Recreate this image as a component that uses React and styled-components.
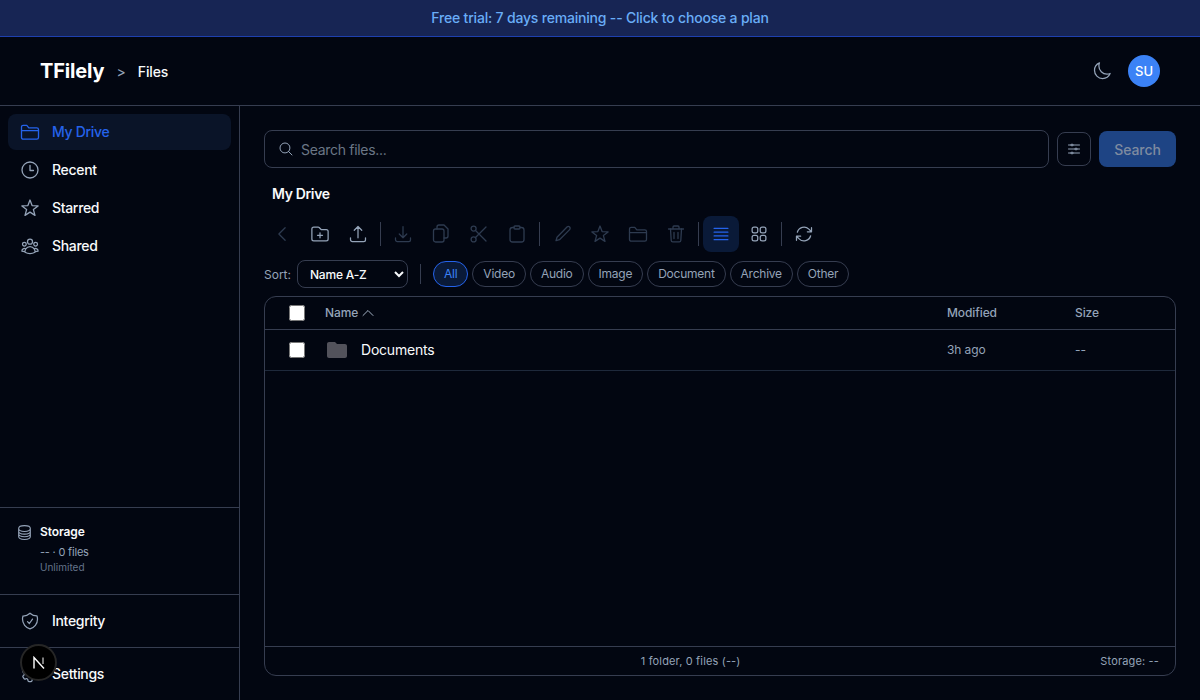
import React from 'react';
import styled, { createGlobalStyle } from 'styled-components';
import {
    HiOutlineUserGroup,
    HiOutlineCircleStack,
    HiOutlineShieldCheck,
    HiOutlineCog6Tooth,
    HiOutlineMoon,
    HiOutlineMagnifyingGlass,
    HiOutlineAdjustmentsHorizontal,
    HiOutlineChevronLeft,
    HiOutlineChevronUp,
    HiOutlineFolderPlus,
    HiOutlineArrowUpTray,
    HiOutlineArrowDownTray,
    HiOutlineBars4,
    HiOutlineSquares2X2,
    HiOutlineArrowPath
} from 'react-icons/hi2';
import { MdFolder } from 'react-icons/md';

const line = '#363d50';

const GlobalStyle = createGlobalStyle`
    html, body {
        margin: 0;
        height: 100%;
        background: #020611;
        overflow: hidden;
    }
    * {
        box-sizing: border-box;
    }
    body {
        font-family: Inter, "Liberation Sans", sans-serif;
        color: #f8fafc;
    }
`;

const Page = styled.div`
    height: 700px;
    display: flex;
    flex-direction: column;
`;

const Banner = styled.div`
    height: 37px;
    flex: none;
    padding-bottom: 2px;
    background: #172554;
    border-bottom: 1px solid #1e40af;
    color: #69adf7;
    font-size: 14px;
    font-weight: 500;
    letter-spacing: -0.19px;
    display: flex;
    align-items: center;
    justify-content: center;
`;

const Header = styled.header`
    height: 69px;
    flex: none;
    border-bottom: 1px solid ${line};
    display: flex;
    align-items: center;
    padding: 0 40px;
`;

const Logo = styled.div`
    font-size: 20px;
    font-weight: 700;
    letter-spacing: -0.15px;
    color: #fff;
`;

const Crumb = styled.span`
    margin-left: 12px;
    font-size: 14px;
    color: #94a3b8;
`;

const CrumbTitle = styled.span`
    margin-left: 12px;
    font-size: 14px;
    font-weight: 500;
    letter-spacing: -0.1px;
    color: #f8fafc;
`;

const HeaderRight = styled.div`
    margin-left: auto;
    display: flex;
    align-items: center;
    gap: 16px;
    color: #94a3b8;
`;

const Avatar = styled.div`
    width: 32px;
    height: 32px;
    border-radius: 50%;
    background: #3b82f6;
    color: #fff;
    font-size: 13px;
    font-weight: 500;
    display: flex;
    align-items: center;
    justify-content: center;
`;

const Body = styled.div`
    flex: 1;
    min-height: 0;
    display: flex;
`;

const Sidebar = styled.aside`
    width: 240px;
    flex: none;
    border-right: 1px solid ${line};
    display: flex;
    flex-direction: column;
`;

const Nav = styled.nav`
    flex: 1;
    padding: 8px 8px 0;
    display: flex;
    flex-direction: column;
    gap: 2px;
`;

const NavItem = styled.div`
    height: 36px;
    display: flex;
    align-items: center;
    gap: 12px;
    padding: 0 12px;
    border-radius: 8px;
    font-size: 14px;
    font-weight: 500;
    letter-spacing: -0.32px;
    background: ${p => (p.$active ? '#0a1428' : 'transparent')};
    color: ${p => (p.$active ? '#2563eb' : '#f8fafc')};

    svg {
        flex: none;
        color: ${p => (p.$active ? '#2563eb' : '#94a3b8')};
    }
`;

const Raised = styled.span`
    margin-bottom: 2px;
`;

const Storage = styled.div`
    height: 87px;
    flex: none;
    border-top: 1px solid ${line};
    padding: 16px 16px 0;
    display: flex;
    gap: 7px;
    color: #94a3b8;
`;

const StorageTitle = styled.div`
    font-size: 12px;
    font-weight: 600;
    letter-spacing: -0.1px;
    color: #f8fafc;
    line-height: 16px;
`;

const StorageInfo = styled.div`
    margin-top: 5px;
    font-size: 11px;
    line-height: 14px;
    letter-spacing: -0.2px;
    color: #94a3b8;
`;

const StorageLimit = styled.div`
    margin-top: 1px;
    font-size: 10px;
    line-height: 14px;
    color: #64748b;
`;

const FooterLink = styled.div`
    height: 53px;
    flex: none;
    border-top: 1px solid ${line};
    padding: 0 8px;
    display: flex;
    align-items: center;
`;

const Main = styled.main`
    flex: 1;
    min-width: 0;
    padding: 24px;
    display: flex;
    flex-direction: column;
`;

const SearchRow = styled.div`
    height: 38px;
    flex: none;
    display: flex;
    align-items: center;
    gap: 8px;
`;

const SearchBox = styled.div`
    flex: 1;
    height: 38px;
    border: 1px solid ${line};
    border-radius: 8px;
    display: flex;
    align-items: center;
    gap: 7px;
    padding: 0 13px;
    font-size: 14px;
    letter-spacing: -0.3px;
    color: #6b7686;

    svg {
        color: #94a3b8;
    }
`;

const FilterButton = styled.div`
    width: 34px;
    height: 34px;
    border: 1px solid ${line};
    border-radius: 8px;
    display: flex;
    align-items: center;
    justify-content: center;
    color: #94a3b8;
`;

const SearchButton = styled.div`
    width: 77px;
    height: 36px;
    border-radius: 8px;
    background: #1e4484;
    color: #7e8ba0;
    font-size: 14px;
    font-weight: 500;
    letter-spacing: -0.1px;
    display: flex;
    align-items: center;
    justify-content: center;
`;

const FolderTitle = styled.div`
    margin: 17px 0 0 8px;
    height: 18px;
    line-height: 18px;
    font-size: 14px;
    font-weight: 600;
    letter-spacing: -0.35px;
    color: #f8fafc;
`;

const Toolbar = styled.div`
    margin-top: 13px;
    height: 36px;
    flex: none;
    display: flex;
    align-items: center;
    gap: 2px;
`;

const ToolButton = styled.div`
    width: 36px;
    height: 36px;
    flex: none;
    border-radius: 8px;
    display: flex;
    align-items: center;
    justify-content: center;
    background: ${p => (p.$active ? '#0a1a38' : 'transparent')};
    color: ${p => (p.$active ? '#2563eb' : p.$off ? '#2e3b50' : '#94a3b8')};
`;

const ToolDivider = styled.div`
    width: 1px;
    height: 24px;
    flex: none;
    margin: 0 2px;
    background: ${line};
`;

const FilterRow = styled.div`
    margin-top: 8px;
    height: 28px;
    flex: none;
    display: flex;
    align-items: center;
    gap: 4px;
`;

const SortLabel = styled.label`
    font-size: 12px;
    color: #94a3b8;
    margin-right: 2px;
`;

const SortSelect = styled.select`
    width: 111px;
    height: 28px;
    padding: 0 4px 0 8px;
    border: 1px solid ${line};
    border-radius: 8px;
    background: #020611;
    color: #f8fafc;
    font-family: inherit;
    font-size: 12px;
    font-weight: 500;
    letter-spacing: -0.2px;
    color-scheme: dark;
`;

const RowDivider = styled.div`
    width: 1px;
    height: 20px;
    margin: 0 8px;
    background: ${line};
`;

const Chip = styled.div`
    height: 26px;
    padding: 0 10px 2px;
    border: 1px solid ${p => (p.$active ? '#2563eb' : line)};
    border-radius: 13px;
    background: ${p => (p.$active ? '#0a1a38' : 'transparent')};
    color: ${p => (p.$active ? '#3b82f6' : '#94a3b8')};
    font-size: 12px;
    letter-spacing: -0.24px;
    display: flex;
    align-items: center;
`;

const Table = styled.div`
    margin-top: 8px;
    flex: 1;
    min-height: 0;
    border: 1px solid ${line};
    border-radius: 12px;
    display: flex;
    flex-direction: column;
`;

const TableHead = styled.div`
    height: 33px;
    flex: none;
    border-bottom: 1px solid ${line};
    display: grid;
    grid-template-columns: 60px 1fr 128px 100px;
    align-items: center;
    font-size: 12px;
    font-weight: 500;
    letter-spacing: -0.1px;
    color: #94a3b8;
`;

const TableRow = styled.div`
    height: 41px;
    flex: none;
    border-bottom: 1px solid #1e293b;
    display: grid;
    grid-template-columns: 60px 1fr 128px 100px;
    align-items: center;
    font-size: 12px;
    letter-spacing: -0.1px;
    color: #94a3b8;
`;

const CheckCell = styled.div`
    padding-left: 24px;
    display: flex;
    align-items: center;
`;

const Check = styled.input.attrs({ type: 'checkbox' })`
    width: 16px;
    height: 16px;
    margin: 0;
    color-scheme: light;
`;

const NameHead = styled.div`
    display: flex;
    align-items: center;
    gap: 2px;

    svg {
        color: #a3b1c4;
    }
`;

const NameCell = styled.div`
    display: flex;
    align-items: center;
    gap: 12px;
    font-size: 14px;
    letter-spacing: -0.22px;
    color: #f8fafc;

    svg {
        color: #52525b;
    }
`;

const TableSpace = styled.div`
    flex: 1;
`;

const TableFoot = styled.div`
    height: 29px;
    flex: none;
    border-top: 1px solid ${line};
    padding: 0 16px;
    display: flex;
    align-items: center;
    justify-content: space-between;
    font-size: 11px;
    letter-spacing: 0.15px;
    color: #94a3b8;
`;

const DevBadge = styled.div`
    position: fixed;
    left: 20px;
    bottom: 19px;
    width: 37px;
    height: 37px;
    border-radius: 50%;
    background: #000;
    border: 2px solid #262626;
    color: #fff;
    display: flex;
    align-items: center;
    justify-content: center;
`;

const LineIcon = ({ children }) => (
    <svg
        width="20"
        height="20"
        viewBox="0 0 20 20"
        fill="none"
        stroke="currentColor"
        strokeWidth="1.3"
        strokeLinecap="round"
        strokeLinejoin="round"
    >
        {children}
    </svg>
);

const FolderIcon = () => (
    <LineIcon>
        <path d="M1.5 5a1.7 1.7 0 0 1 1.7-1.7h3.6l2 2.5h8a1.7 1.7 0 0 1 1.7 1.7v8a1.7 1.7 0 0 1-1.7 1.7H3.2a1.7 1.7 0 0 1-1.7-1.7Z" />
        <path d="M1.5 8.6h17" />
    </LineIcon>
);

const ClockIcon = () => (
    <LineIcon>
        <circle cx="10" cy="10" r="8" />
        <path d="M10 5.5v5h3.5" />
    </LineIcon>
);

const StarIcon = () => (
    <LineIcon>
        <path d="M10 2l2.1 5.6 6 .3-4.7 3.7 1.6 5.8-5-3.3-5 3.3 1.6-5.8L1.9 7.9l6-.3Z" />
    </LineIcon>
);

const CopyIcon = () => (
    <LineIcon>
        <rect x="2.5" y="5" width="10.5" height="13" rx="2" />
        <path d="M6 5V3a2 2 0 0 1 2-2h5l4 4v7a2 2 0 0 1-2 2h-2" />
    </LineIcon>
);

const ScissorsIcon = () => (
    <LineIcon>
        <circle cx="4.6" cy="4.6" r="2.5" />
        <circle cx="4.6" cy="15.4" r="2.5" />
        <path d="M6.5 6.5L17 17M6.5 13.5L17 3" />
    </LineIcon>
);

const ClipboardIcon = () => (
    <LineIcon>
        <path d="M7 3.5H5.5A2.5 2.5 0 0 0 3 6v9.5A2.5 2.5 0 0 0 5.5 18h9a2.5 2.5 0 0 0 2.5-2.5V6a2.5 2.5 0 0 0-2.5-2.5H13" />
        <rect x="7" y="2" width="6" height="3" rx="1" />
    </LineIcon>
);

const PencilIcon = () => (
    <LineIcon>
        <path d="M15 3a1.8 1.8 0 0 1 2.6 2.6L7.5 15.7l-3.5 1 1-3.5Z" />
    </LineIcon>
);

const TrashIcon = () => (
    <LineIcon>
        <path d="M2.5 5h15M7 5V3a1 1 0 0 1 1-1h4a1 1 0 0 1 1 1v2" />
        <path d="M4.5 5l.7 11.5a1.5 1.5 0 0 0 1.5 1.4h6.6a1.5 1.5 0 0 0 1.5-1.4L15.5 5" />
        <path d="M8 8.5v6M12 8.5v6" />
    </LineIcon>
);

const NextMark = () => (
    <svg width="14" height="14" viewBox="0 0 14 14" fill="none" stroke="#fff" strokeWidth="1.4">
        <path d="M2 12.5V1.5L12 12.5" />
        <path d="M11 1.5V8" strokeOpacity="0.7" />
    </svg>
);

const navItems = [
    { label: 'My Drive', icon: FolderIcon, active: true },
    { label: 'Recent', icon: ClockIcon },
    { label: 'Starred', icon: StarIcon },
    { label: 'Shared', icon: HiOutlineUserGroup }
];

const chips = ['All', 'Video', 'Audio', 'Image', 'Document', 'Archive', 'Other'];

function Tool({ icon: Icon, off, active }) {
    return (
        <ToolButton $off={off} $active={active}>
            <Icon size={20} />
        </ToolButton>
    );
}

export default function App() {
    return (
        <Page>
            <GlobalStyle />
            <Banner>Free trial: 7 days remaining -- Click to choose a plan</Banner>
            <Header>
                <Logo>TFilely</Logo>
                <Crumb>&gt;</Crumb>
                <CrumbTitle>Files</CrumbTitle>
                <HeaderRight>
                    <HiOutlineMoon size={20} />
                    <Avatar>SU</Avatar>
                </HeaderRight>
            </Header>
            <Body>
                <Sidebar>
                    <Nav>
                        {navItems.map(({ label, icon: Icon, active }) => (
                            <NavItem key={label} $active={active}>
                                <Icon size={20} />
                                <Raised>{label}</Raised>
                            </NavItem>
                        ))}
                    </Nav>
                    <Storage>
                        <HiOutlineCircleStack size={17} />
                        <div>
                            <StorageTitle>Storage</StorageTitle>
                            <StorageInfo>-- · 0 files</StorageInfo>
                            <StorageLimit>Unlimited</StorageLimit>
                        </div>
                    </Storage>
                    <FooterLink>
                        <NavItem>
                            <HiOutlineShieldCheck size={20} />
                            <Raised>Integrity</Raised>
                        </NavItem>
                    </FooterLink>
                    <FooterLink>
                        <NavItem>
                            <HiOutlineCog6Tooth size={20} />
                            <Raised>Settings</Raised>
                        </NavItem>
                    </FooterLink>
                </Sidebar>
                <Main>
                    <SearchRow>
                        <SearchBox>
                            <HiOutlineMagnifyingGlass size={16} />
                            Search files...
                        </SearchBox>
                        <FilterButton>
                            <HiOutlineAdjustmentsHorizontal size={16} />
                        </FilterButton>
                        <SearchButton>Search</SearchButton>
                    </SearchRow>
                    <FolderTitle>My Drive</FolderTitle>
                    <Toolbar>
                        <Tool icon={HiOutlineChevronLeft} off />
                        <Tool icon={HiOutlineFolderPlus} />
                        <Tool icon={HiOutlineArrowUpTray} />
                        <ToolDivider />
                        <Tool icon={HiOutlineArrowDownTray} off />
                        <Tool icon={CopyIcon} off />
                        <Tool icon={ScissorsIcon} off />
                        <Tool icon={ClipboardIcon} off />
                        <ToolDivider />
                        <Tool icon={PencilIcon} off />
                        <Tool icon={StarIcon} off />
                        <Tool icon={FolderIcon} off />
                        <Tool icon={TrashIcon} off />
                        <ToolDivider />
                        <Tool icon={HiOutlineBars4} active />
                        <Tool icon={HiOutlineSquares2X2} />
                        <ToolDivider />
                        <Tool icon={HiOutlineArrowPath} />
                    </Toolbar>
                    <FilterRow>
                        <SortLabel>Sort:</SortLabel>
                        <SortSelect defaultValue="name-asc">
                            <option value="name-asc">Name A-Z</option>
                            <option value="name-desc">Name Z-A</option>
                        </SortSelect>
                        <RowDivider />
                        {chips.map(chip => (
                            <Chip key={chip} $active={chip === 'All'}>{chip}</Chip>
                        ))}
                    </FilterRow>
                    <Table>
                        <TableHead>
                            <CheckCell><Check readOnly /></CheckCell>
                            <NameHead>
                                <Raised>Name</Raised>
                                <HiOutlineChevronUp size={16} />
                            </NameHead>
                            <Raised>Modified</Raised>
                            <Raised>Size</Raised>
                        </TableHead>
                        <TableRow>
                            <CheckCell><Check readOnly /></CheckCell>
                            <NameCell>
                                <MdFolder size={24} />
                                <Raised>Documents</Raised>
                            </NameCell>
                            <Raised>3h ago</Raised>
                            <Raised>--</Raised>
                        </TableRow>
                        <TableSpace />
                        <TableFoot>
                            <span />
                            <span>1 folder, 0 files (--)</span>
                            <span>Storage: --</span>
                        </TableFoot>
                    </Table>
                </Main>
            </Body>
            <DevBadge><NextMark /></DevBadge>
        </Page>
    );
}
